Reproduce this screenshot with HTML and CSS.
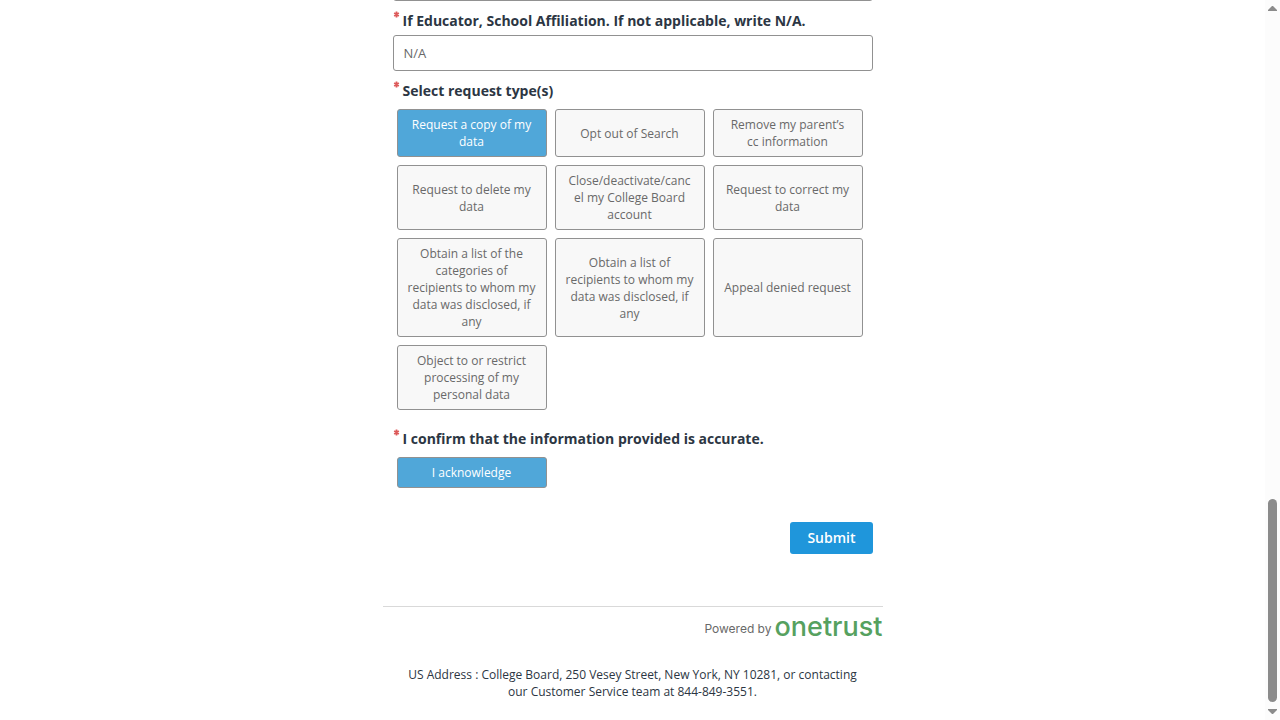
FILE: index.html
```
<!DOCTYPE html>
<html lang="en">
<head>
<meta charset="utf-8">
<meta name="viewport" content="width=device-width, initial-scale=1">
<title>Privacy Request Form</title>
<link rel="stylesheet" href="styles.css">
</head>
<body>
<main class="page">
  <form class="form">
    <input class="text-input text-input--scrolled" type="text" aria-label="Previous answer">

    <div class="field">
      <label class="label" for="school"><svg class="required" viewBox="0 0 12 12" role="img" aria-label="required"><path d="M6 1v10M2 3.5l8 5M10 3.5l-8 5"/></svg>If Educator, School Affiliation. If not applicable, write N/A.</label>
      <input class="text-input" id="school" type="text" value="N/A" required>
    </div>

    <div class="field" role="group" aria-labelledby="types-label">
      <div class="label label--group" id="types-label"><svg class="required" viewBox="0 0 12 12" role="img" aria-label="required"><path d="M6 1v10M2 3.5l8 5M10 3.5l-8 5"/></svg>Select request type(s)</div>
      <div class="options">
        <button class="option option--selected" type="button" aria-pressed="true">Request a copy of my data</button>
        <button class="option" type="button" aria-pressed="false">Opt out of Search</button>
        <button class="option" type="button" aria-pressed="false">Remove my parent’s cc information</button>
        <button class="option" type="button" aria-pressed="false">Request to delete my data</button>
        <button class="option" type="button" aria-pressed="false">Close/deactivate/cancel my College Board account</button>
        <button class="option" type="button" aria-pressed="false">Request to correct my data</button>
        <button class="option" type="button" aria-pressed="false">Obtain a list of the categories of recipients to whom my data was disclosed, if any</button>
        <button class="option" type="button" aria-pressed="false">Obtain a list of recipients to whom my data was disclosed, if any</button>
        <button class="option" type="button" aria-pressed="false">Appeal denied request</button>
        <button class="option" type="button" aria-pressed="false">Object to or restrict processing of my personal data</button>
      </div>
    </div>

    <div class="field field--confirm" role="group" aria-labelledby="confirm-label">
      <div class="label label--group" id="confirm-label"><svg class="required" viewBox="0 0 12 12" role="img" aria-label="required"><path d="M6 1v10M2 3.5l8 5M10 3.5l-8 5"/></svg>I confirm that the information provided is accurate.</div>
      <div class="options">
        <button class="option option--selected" type="button" aria-pressed="true">I acknowledge</button>
      </div>
    </div>

    <div class="actions">
      <button class="submit" type="submit">Submit</button>
    </div>
  </form>

  <footer class="footer">
    <div class="powered"><span>Powered by</span><span class="brand">onetrust</span></div>
    <p class="address">US Address : College Board, 250 Vesey Street, New York, NY 10281, or contacting our Customer Service team at 844-849-3551.</p>
  </footer>
</main>
<div class="scrollbar" aria-hidden="true">
  <svg class="arrow" viewBox="0 0 9 5"><path d="M4 0h1l4 4v1H0V4z"/></svg>
  <div class="track"><div class="thumb"></div></div>
  <svg class="arrow" viewBox="0 0 9 5"><path d="M0 0h9v1L5 5H4L0 1z"/></svg>
</div>
</body>
</html>
```
FILE: styles.css
```
* {
  box-sizing: border-box;
}

body {
  display: flex;
  height: 100vh;
  margin: 0;
  overflow: hidden;
  background: #fff;
  color: #2c3643;
  font-family: "Open Sans", "Noto Sans", sans-serif;
  font-size: 12px;
  line-height: 17px;
}

button,
input {
  font-family: inherit;
}

.page {
  display: flex;
  flex: 1;
  flex-direction: column;
  align-items: center;
  min-width: 0;
}

.form {
  width: 100%;
  max-width: 500px;
  padding: 0 10px;
}

.text-input {
  display: block;
  width: 100%;
  height: 36px;
  padding: 0 10px;
  border: 1px solid #919191;
  border-radius: 3px;
  background: #fff;
  color: #696969;
  font-size: 13px;
}

.text-input--scrolled {
  margin-top: -35px;
}

.field {
  margin-top: 10px;
}

.field--confirm {
  margin-top: 19px;
}

.label {
  display: flex;
  align-items: flex-start;
  gap: 3px;
  margin-bottom: 4px;
  font-size: 14px;
  font-weight: 700;
  line-height: 20px;
}

.label--group {
  margin-bottom: 8px;
}

.required {
  flex: none;
  width: 7px;
  height: 7px;
  fill: none;
  stroke: #dd5a5a;
  stroke-width: 3;
}

.options {
  display: grid;
  grid-template-columns: repeat(auto-fill, 150px);
  gap: 8px;
  padding: 0 4px;
}

.option {
  padding: 6px 10px;
  border: 1px solid #919191;
  border-radius: 3px;
  background: #f8f8f8;
  color: #696969;
  font-size: 12px;
  line-height: 17px;
  overflow-wrap: anywhere;
}

.option--selected {
  background: #50a7d9;
  color: #fff;
}

.actions {
  display: flex;
  justify-content: flex-end;
  margin-top: 34px;
}

.submit {
  height: 32px;
  padding: 0 17px 2px;
  border: 0;
  border-radius: 3px;
  background: #1f96db;
  color: #fff;
  font-size: 14px;
  font-weight: 600;
}

.footer {
  width: 100%;
  max-width: 500px;
  margin-top: 52px;
  border-top: 1px solid #d9d9d9;
}

.powered {
  display: flex;
  align-items: flex-start;
  justify-content: flex-end;
  gap: 3px;
  margin-top: 4px;
  color: #696969;
  font-family: Inter, sans-serif;
  line-height: 36px;
}

.brand {
  color: #56a15f;
  font-size: 27px;
  font-weight: 500;
  line-height: 32px;
}

.address {
  margin: 19px 24px 0;
  text-align: center;
}

.scrollbar {
  display: flex;
  flex-direction: column;
  align-items: center;
  width: 15px;
  padding: 6px 0;
  background: #fcfcfc;
}

.arrow {
  width: 9px;
  height: 5px;
  fill: #8b8b8b;
}

.track {
  display: flex;
  flex: 1;
  align-items: flex-end;
  padding: 7px 0;
}

.thumb {
  width: 9px;
  height: 29.7%;
  border-radius: 5px;
  background: #8b8b8b;
}
```
